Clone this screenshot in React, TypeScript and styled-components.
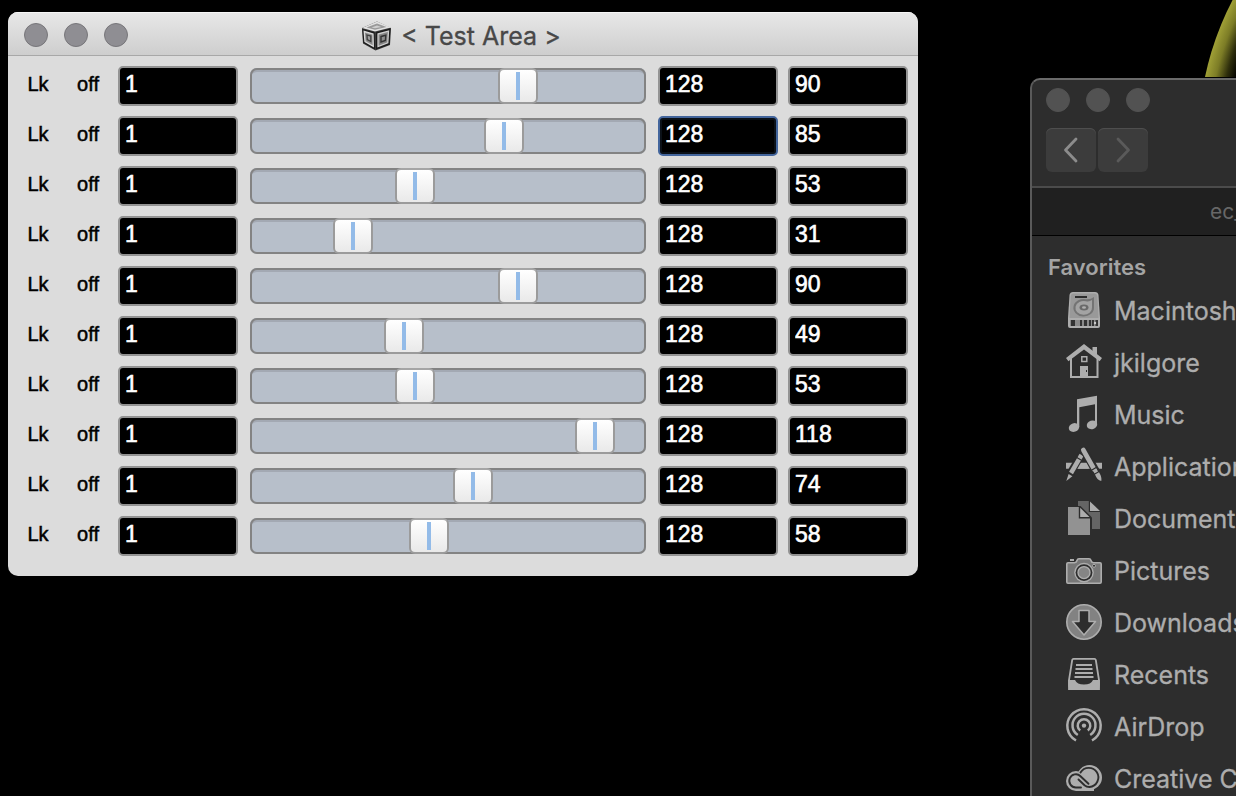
import React, { useState } from "react";
import styled, { createGlobalStyle } from "styled-components";

const GlobalStyle = createGlobalStyle`
  *, *::before, *::after { box-sizing: border-box; }
  body { margin: 0; background: #000; font-family: Inter, "Liberation Sans", sans-serif; }
  button, input { font: inherit; margin: 0; }
`;

const Desktop = styled.main`
  position: relative;
  min-height: 100vh;
  overflow: hidden;
  background: #000;
`;

const Wallpaper = styled.svg`
  position: absolute;
  top: 0;
  left: 1196px;
  width: 40px;
  height: 77px;
`;

const MixerWindow = styled.section`
  position: absolute;
  top: 12px;
  left: 8px;
  right: 318px;
  min-width: 700px;
  border-radius: 10px;
  overflow: hidden;
  background: #dcdcdc;
`;

const TitleBar = styled.header`
  display: grid;
  grid-template-columns: 1fr auto 1fr;
  align-items: center;
  height: 44px;
  padding: 2px 20px 0 16px;
  border-bottom: 1px solid #a8a8a8;
  background: linear-gradient(#e8e8e8, #cecece);
  box-shadow: inset 0 1px 0 #f6f6f6;
`;

const Lights = styled.div`
  display: flex;
  gap: 16px;
`;

const Light = styled.button<{ $dark?: boolean }>`
  width: 24px;
  height: 24px;
  padding: 0;
  border-radius: 50%;
  border: 1px solid ${(p) => (p.$dark ? "#525252" : "#77767a")};
  background: ${(p) => (p.$dark ? "#525252" : "#8f8e93")};
`;

const Title = styled.h1`
  display: flex;
  align-items: center;
  gap: 9px;
  margin: 0;
  padding-top: 2px;
  font-size: 25px;
  font-weight: 400;
  line-height: 32px;
  color: #484848;
  white-space: nowrap;
  -webkit-text-stroke: 0.3px #484848;
`;

const Rows = styled.div`
  display: flex;
  flex-direction: column;
  gap: 10px;
  padding: 10px 10px 20px;
`;

const Row = styled.div`
  display: grid;
  grid-template-columns: 40px 40px 120px minmax(0, 1fr) 120px 120px;
  align-items: center;
  gap: 10px;
  height: 40px;
  font-family: "Liberation Sans", Arial, sans-serif;
`;

const Toggle = styled.button`
  height: 40px;
  padding: 0 0 4px;
  border: 0;
  background: none;
  color: #000;
  font-size: 20px;
  line-height: 24px;
  -webkit-text-stroke: 0.5px #000;
`;

const Field = styled.input<{ $active?: boolean }>`
  width: 100%;
  height: 40px;
  padding: 0 4px 4px 5px;
  border: 2px solid ${(p) => (p.$active ? "#43659c" : "#939393")};
  border-radius: 5px;
  outline: 0;
  background: #000;
  box-shadow: ${(p) => (p.$active ? "inset 0 0 0 2px #0b1118" : "none")};
  color: #fff;
  font-size: 23px;
  line-height: 28px;
  -webkit-text-stroke: 0.6px #fff;
`;

const SliderCell = styled.div`
  display: flex;
  padding: 0 2px;
`;

const Slider = styled.input`
  appearance: none;
  width: 100%;
  height: 36px;
  border-radius: 7px;
  background: #b7bfca;
  box-shadow: inset 0 0 0 2px #838383, inset 0 4px 0 #a3a9b3;

  &::-webkit-slider-thumb {
    appearance: none;
    width: 40px;
    height: 36px;
    border: 2px solid #9b9b9b;
    border-top-color: #a5a5a5;
    border-radius: 6px;
    background:
      linear-gradient(#93bbe8, #93bbe8) center / 4px 28px no-repeat,
      linear-gradient(#ffffff, #e9e9e9);
  }
`;

const FinderWindow = styled.section`
  position: absolute;
  top: 78px;
  left: 1030px;
  right: -300px;
  bottom: -20px;
  overflow: hidden;
  border: 2px solid #5a5a5a;
  border-top-color: #6a6a6a;
  border-radius: 10px;
  background: #2d2d2d;
  color: #adadad;
`;

const FinderHead = styled.header`
  display: flex;
  flex-direction: column;
  gap: 16px;
  height: 108px;
  padding: 8px 14px;
  border-bottom: 2px solid #4b4b4b;
`;

const NavButtons = styled.nav`
  display: flex;
  gap: 2px;
`;

const NavButton = styled.button<{ $tone: string }>`
  display: grid;
  place-items: center;
  width: 50px;
  height: 44px;
  padding: 0;
  border: 0;
  border-radius: 6px;
  background: #3c3c3c;
  box-shadow: inset 0 1px 0 #4e4e4e;
  color: ${(p) => p.$tone};
`;

const TabBar = styled.div`
  height: 48px;
  padding-left: 178px;
  border-bottom: 1px solid #000;
  background: #202020;
  color: #676767;
  font-size: 21px;
  line-height: 48px;
`;

const Sidebar = styled.nav`
  padding: 17px 0 0 16px;
`;

const SidebarHeading = styled.h2`
  margin: 0;
  font-size: 22px;
  font-weight: 600;
  line-height: 28px;
  color: #a4a4a4;
`;

const Places = styled.ul`
  margin: 3px 0 0;
  padding: 0 0 0 18px;
  list-style: none;
`;

const Place = styled.a`
  display: flex;
  align-items: center;
  gap: 12px;
  height: 52px;
  color: #adadad;
  font-size: 25px;
  line-height: 32px;
  text-decoration: none;
  white-space: nowrap;
  -webkit-text-stroke: 0.3px #adadad;
`;

const PlaceName = styled.span`
  padding-top: 2px;
`;

const Glyph = styled.svg`
  flex: none;
  width: 36px;
  height: 36px;
  overflow: visible;
`;

const L = "#adadad";
const M = "#929292";
const D = "#2d2d2d";

const icons: Record<string, React.ReactNode> = {
  disk: (
    <>
      <path d="M7 0H29Q32 0 32.500 3L34 26V34Q34 36 32 36H4Q2 36 2 34V26L3.500 3Q4 0 7 0Z" fill={L} />
      <path d="M7 1.500H29Q31 1.500 31.300 4L32.500 26H3.500L4.700 4Q5 1.500 7 1.500Z" fill="#999" />
      <path d="M9 4H21V6H9Z" fill={D} />
      <path d="M28 5V15.500A10.300 8.800 0 1 1 20.500 7.300Q25 7.500 28 5Z" fill="#747474" />
      <path d="M26 8V15.500A8.300 6.900 0 1 1 20 9.300Q23.500 10 26 8Z" fill="#a3a3a3" />
      <ellipse cx="18" cy="15.500" rx="4.500" ry="3" fill="#6a6a6a" />
      <ellipse cx="18" cy="15.500" rx="2" ry="1.200" fill="#b0b0b0" />
      <path d="M4 28H32V34H4Z" fill="#8a8a8a" />
      <path d="M5 28H9V34H5ZM14 28H16V34H14ZM18 28H21V34H18ZM23 28H25V34H23ZM26 28H28V34H26ZM29.500 28H32V34H29.500Z" fill="#333" />
      <circle cx="29" cy="31" r="1.200" fill="#ccc" />
    </>
  ),
  home: (
    <>
      <path d="M5 12V33H31.500V12" fill="none" stroke={L} strokeWidth="2" />
      <path d="M26.500 3H31V12L26.500 8Z" fill={L} />
      <path d="M18 0L36 14L33.600 17.200L18 5.400L2.400 17.200L0 14Z" fill={L} />
      <path d="M15.800 12.800H20.800V17.600H15.800Z" fill="none" stroke={L} strokeWidth="1.500" />
      <path d="M14 22H22V34H14Z" fill={L} />
      <path d="M20 26H21V28H20Z" fill={D} />
    </>
  ),
  music: (
    <>
      <path d="M11 3.300L31 -.3V9L29 9.200V8.300L13.300 11.300V31H11Z" fill={L} />
      <path d="M29 8H31V28H29Z" fill={L} />
      <ellipse cx="8" cy="31.500" rx="5.300" ry="4.300" transform="rotate(-18 8 31.500)" fill={L} />
      <ellipse cx="26" cy="28.800" rx="5.300" ry="4.300" transform="rotate(-18 26 28.800)" fill={L} />
    </>
  ),
  apps: (
    <>
      <path d="M0 14.700H36V20.700H0Z" fill={L} />
      <path d="M16.500 5L3 28" stroke={D} strokeWidth="8" />
      <path d="M17 1.500L32 28" stroke={D} strokeWidth="9" />
      <path d="M11 17.500L17.500 7L24.500 17.500Z" fill={D} />
      <path d="M12 14.700H23L26 20.700H9Z" fill={L} />
      <path d="M15 8L4.500 26" stroke={D} strokeWidth="6.500" />
      <path d="M15.500 7L5 25" stroke={L} strokeWidth="4.500" />
      <path d="M2.600 26L6.400 28.200L.3 33Z" fill={L} />
      <path d="M17.300 2L28 21" stroke={D} strokeWidth="7" strokeLinecap="round" />
      <path d="M17.300 2L28 21" stroke={L} strokeWidth="4.600" strokeLinecap="round" />
      <path d="M27 22.500L30.500 20.500L32 23.500L28.500 25.500ZM29 26.500L33 24.300Q36 29 35.300 33Q31 32 29 26.500Z" fill={L} />
      <path d="M10.800 9.500L15.500 12.200M25 22.500L31 19" stroke={D} strokeWidth="1.200" />
    </>
  ),
  documents: (
    <>
      <path d="M12 1H22.800V12H34V29H12Z" fill="#656565" />
      <path d="M24 1.500L34 11H24Z" fill={L} />
      <path d="M1 6H14.500L26 17.500V36H1Z" fill={D} />
      <path d="M2 7H12.800V18.500H24V35H2Z" fill={M} />
      <path d="M14.200 7.800L23.500 17H14.200Z" fill={L} />
    </>
  ),
  pictures: (
    <>
      <path d="M4 7H8V9H4Z" fill={L} />
      <path d="M2 10.800H8.500Q10.500 10.500 11 8.500Q11.500 6.800 13 6.800H23Q24.500 6.800 25 8.500Q25.500 10.500 27.500 10.800H34Q35.200 10.800 35.200 12V30Q35.200 31.200 34 31.200H2Q.8 31.200 .8 30V12Q.8 10.800 2 10.800Z" fill="#777" stroke={L} strokeWidth="1.600" />
      <circle cx="18" cy="20.600" r="9.800" fill={L} />
      <circle cx="18" cy="20.600" r="8.400" fill={D} />
      <circle cx="18" cy="20.600" r="6" fill="#858585" stroke={L} strokeWidth="1.400" />
      <circle cx="28" cy="13.800" r="1.500" fill={D} stroke={L} />
    </>
  ),
  downloads: (
    <>
      <circle cx="18" cy="18" r="17.200" fill="#828282" stroke={L} strokeWidth="1.600" />
      <path d="M13 6.500H23V17.500H29.500L18 31L6.500 17.500H13Z" fill={D} stroke={L} strokeWidth="1.500" strokeLinejoin="round" />
    </>
  ),
  recents: (
    <>
      <path d="M7.500 2.800H28.500Q29.500 2.800 29.800 4L33 24V33H3V24L6.200 4Q6.500 2.800 7.500 2.800Z" fill={D} stroke={L} strokeWidth="1.800" />
      <path d="M2.200 24H9Q11 28.500 18 28.500Q25 28.500 27 24H33.800V29L33 33Q32.500 34 31 34H5Q3.500 34 3 33L2.200 29Z" fill={L} />
      <path d="M10 9H26M9.500 13H26.500M9 17H27M8.500 21H27.500" stroke={L} strokeWidth="2" />
    </>
  ),
  airdrop: (
    <g fill="none" stroke={L} strokeWidth="2.500">
      <path d="M10 32.500A16.700 16.700 0 1 1 26 32.500" />
      <path d="M11.800 27A11.500 11.500 0 1 1 24.200 27" />
      <path d="M14.200 22.600A6.300 6.300 0 1 1 21.800 22.600" />
      <circle cx="18" cy="17.600" r="2.200" fill={L} stroke="none" />
    </g>
  ),
  cloud: (
    <>
      <circle cx="10" cy="21" r="10" fill={L} />
      <circle cx="23.500" cy="17.500" r="12.500" fill={L} />
      <path d="M10 20H28V31H10Z" fill={L} />
      <path d="M15 27.500H10A6.600 6.600 0 1 1 14.500 16.200L22.500 23.800" fill="none" stroke={D} strokeWidth="1.900" strokeLinecap="round" />
      <path d="M14.500 12.500A9.600 9.600 0 1 1 23.500 27Q20.500 27 18.500 25.200L12.500 19.500" fill="none" stroke={D} strokeWidth="1.900" strokeLinecap="round" />
    </>
  ),
};

const places = [
  ["disk", "Macintosh HD"],
  ["home", "jkilgore"],
  ["music", "Music"],
  ["apps", "Applications"],
  ["documents", "Documents"],
  ["pictures", "Pictures"],
  ["downloads", "Downloads"],
  ["recents", "Recents"],
  ["airdrop", "AirDrop"],
  ["cloud", "Creative Cloud Files"],
];

const CubeIcon = () => (
  <svg width="31" height="30" viewBox="0 0 31 30" aria-hidden="true">
    <path d="M1 7L16 .5L30 7L29 24L14.500 29.500L2 22.500Z" fill="#3a3a3a" />
    <path d="M1 7L16 .5L30 6.500L14 10.500Z" fill="#e2e2e2" />
    <path d="M5.500 6.600L16 2.500L25.500 6L14 8.800Z" fill="#9a9a9a" />
    <path d="M10.500 6.400L16 4.400L20.500 5.900L14 7.300Z" fill="#cfcfcf" />
    <path d="M1.300 8L13.500 11.300L14 28.500L2.300 21.800Z" fill="#1c1c1c" />
    <path d="M3.200 10.500L12 13L12.300 25.300L4 20.500Z" fill="#8c8c8c" stroke="#d8d8d8" strokeWidth="1.300" />
    <path d="M6 14L9.800 15.100V20.500L6.300 18.500Z" fill="#9c9c9c" stroke="#404040" strokeWidth="1.300" />
    <path d="M15 11.300L29.500 7.500L28.600 23.600L15 28.500Z" fill="#1c1c1c" />
    <path d="M17 13L27.500 10.200L26.800 21.800L17 25.500Z" fill="#858585" stroke="#cfcfcf" strokeWidth="1.300" />
    <path d="M20 15.500L24.800 14.200L24.400 19.400L20 21Z" fill="#8c8c8c" stroke="#333" strokeWidth="1.400" />
  </svg>
);

const WindowLights = ({ dark }: { dark?: boolean }) => (
  <Lights>
    {["Close", "Minimize", "Zoom"].map((name) => (
      <Light key={name} $dark={dark} aria-label={name} />
    ))}
  </Lights>
);

const initialLevels = [90, 85, 53, 31, 90, 49, 53, 118, 74, 58];

export default function App() {
  const [levels, setLevels] = useState(initialLevels);
  const setLevel = (index: number, value: number) =>
    setLevels((all) => all.map((v, i) => (i === index ? value : v)));

  return (
    <>
      <GlobalStyle />
      <Desktop>
        <Wallpaper viewBox="0 0 40 77" aria-hidden="true">
          <defs>
            <radialGradient id="rim" gradientUnits="userSpaceOnUse" cx="303" cy="139" r="300.500">
              <stop offset="0.9" stopColor="#050500" />
              <stop offset="0.93" stopColor="#2e2e0c" />
              <stop offset="0.965" stopColor="#7c7c26" />
              <stop offset="1" stopColor="#a0a036" />
            </radialGradient>
          </defs>
          <circle cx="303" cy="139" r="300.500" fill="url(#rim)" />
        </Wallpaper>

        <MixerWindow aria-label="Test Area">
          <TitleBar>
            <WindowLights />
            <Title>
              <CubeIcon />
              &lt; Test Area &gt;
            </Title>
          </TitleBar>
          <Rows>
            {levels.map((level, i) => (
              <Row key={i}>
                <Toggle>Lk</Toggle>
                <Toggle>off</Toggle>
                <Field aria-label={`Channel, row ${i + 1}`} defaultValue="1" />
                <SliderCell>
                  <Slider
                    type="range"
                    min={1}
                    max={129}
                    value={level}
                    aria-label={`Level, row ${i + 1}`}
                    onChange={(e) => setLevel(i, Number(e.target.value))}
                  />
                </SliderCell>
                <Field aria-label={`Range, row ${i + 1}`} defaultValue="128" $active={i === 1} />
                <Field
                  aria-label={`Value, row ${i + 1}`}
                  value={level}
                  onChange={(e) => setLevel(i, Number(e.target.value) || 1)}
                />
              </Row>
            ))}
          </Rows>
        </MixerWindow>

        <FinderWindow aria-label="Finder">
          <FinderHead>
            <WindowLights dark />
            <NavButtons aria-label="History">
              <NavButton $tone="#8c8c8c" aria-label="Back">
                <svg width="16" height="26" viewBox="0 0 16 26" fill="none" stroke="currentColor" strokeWidth="2.800" strokeLinecap="round" strokeLinejoin="round">
                  <path d="M13 2L2.500 13L13 24" />
                </svg>
              </NavButton>
              <NavButton $tone="#5a5a5a" aria-label="Forward">
                <svg width="16" height="26" viewBox="0 0 16 26" fill="none" stroke="currentColor" strokeWidth="2.800" strokeLinecap="round" strokeLinejoin="round">
                  <path d="M3 2L13.500 13L3 24" />
                </svg>
              </NavButton>
            </NavButtons>
          </FinderHead>
          <TabBar>ec_</TabBar>
          <Sidebar>
            <SidebarHeading>Favorites</SidebarHeading>
            <Places>
              {places.map(([icon, label]) => (
                <li key={icon}>
                  <Place href="#">
                    <Glyph viewBox="0 0 36 36" aria-hidden="true">
                      {icons[icon]}
                    </Glyph>
                    <PlaceName>{label}</PlaceName>
                  </Place>
                </li>
              ))}
            </Places>
          </Sidebar>
        </FinderWindow>
      </Desktop>
    </>
  );
}
